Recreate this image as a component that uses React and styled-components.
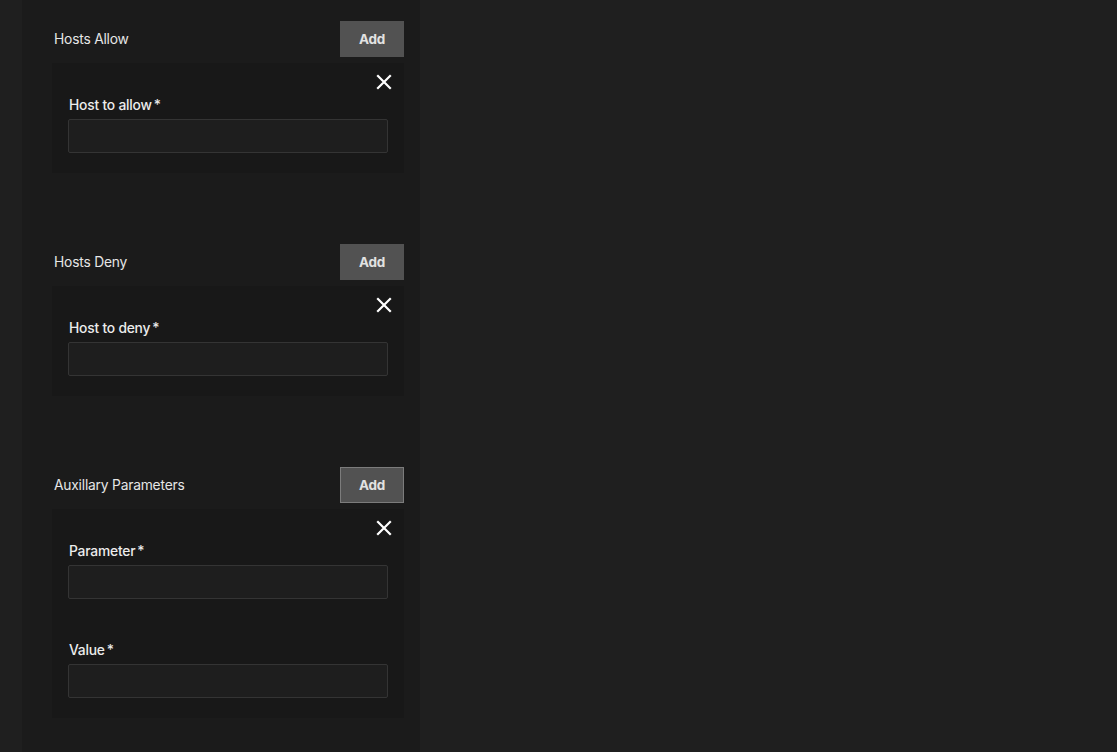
import React from "react";
import styled, { createGlobalStyle } from "styled-components";

const Global = createGlobalStyle`
  html, body {
    margin: 0;
    padding: 0;
    background: #1f1f1f;
  }
  body {
    font-family: Inter, "Noto Sans", sans-serif;
    color: #e8e8e8;
  }
`;

function CloseIcon() {
  return (
    <svg width="16" height="16" viewBox="0 0 16 16">
      <path
        d="M2 2 L14 14 M14 2 L2 14"
        stroke="#fff"
        strokeWidth="2.2"
        strokeLinecap="square"
      />
    </svg>
  );
}

const sections = [
  { title: "Hosts Allow", fields: ["Host to allow"] },
  { title: "Hosts Deny", fields: ["Host to deny"] },
  { title: "Auxillary Parameters", fields: ["Parameter", "Value"], focused: true },
];

function App() {
  return (
    <>
      <Global />
      <Page>
        <Panel>
          {sections.map((s) => (
            <Section key={s.title}>
              <Header>
                <Title>{s.title}</Title>
                <AddButton $focused={s.focused}>Add</AddButton>
              </Header>
              <Card>
                <CloseRow>
                  <CloseButton>
                    <CloseIcon />
                  </CloseButton>
                </CloseRow>
                {s.fields.map((f) => (
                  <Field key={f}>
                    <Label>
                      {f}
                      <Star>*</Star>
                    </Label>
                    <Input />
                  </Field>
                ))}
              </Card>
            </Section>
          ))}
        </Panel>
      </Page>
    </>
  );
}

export default App;

const Page = styled.div`
  display: flex;
  min-height: 100vh;
  padding-left: 22px;
`;

const Panel = styled.div`
  width: 398px;
  box-sizing: border-box;
  background: #1b1b1b;
  padding: 21px 16px 0 30px;
  display: flex;
  flex-direction: column;
  gap: 71px;
`;

const Section = styled.div`
  display: flex;
  flex-direction: column;
  gap: 6px;
`;

const Header = styled.div`
  display: flex;
  align-items: center;
  justify-content: space-between;
  padding-left: 2px;
  height: 36px;
`;

const Title = styled.div`
  font-size: 13.8px;
  color: #e6e6e6;
  letter-spacing: -0.2px;
`;

const AddButton = styled.button`
  width: 64px;
  height: 36px;
  box-sizing: border-box;
  background: #525252;
  border: 1px solid ${(p) => (p.$focused ? "#7c7c7c" : "#525252")};
  color: #e2e2e2;
  font-family: Inter, sans-serif;
  font-weight: 700;
  font-size: 13.5px;
  letter-spacing: -0.3px;
  padding: 0;
  cursor: pointer;
`;

const Card = styled.div`
  background: #181818;
  padding: 7px 16px 20px 16px;
  display: flex;
  flex-direction: column;
`;

const CloseRow = styled.div`
  display: flex;
  justify-content: flex-end;
  height: 24px;
  margin-right: -8px;
`;

const CloseButton = styled.button`
  width: 24px;
  height: 24px;
  padding: 0;
  border: none;
  background: transparent;
  display: flex;
  align-items: center;
  justify-content: center;
  cursor: pointer;
`;

const Field = styled.div`
  display: flex;
  flex-direction: column;
  margin-top: 3px;
  & + & {
    margin-top: 43px;
  }
`;

const Label = styled.label`
  font-size: 13.8px;
  font-weight: 500;
  line-height: 16px;
  color: #ececec;
  margin-bottom: 6px;
  padding-left: 1px;
  letter-spacing: -0.2px;
`;

const Star = styled.span`
  margin-left: 2px;
`;

const Input = styled.input`
  height: 34px;
  box-sizing: border-box;
  background: #1e1e1e;
  border: 1px solid #343434;
  border-radius: 2px;
  color: #eee;
  outline: none;
`;
